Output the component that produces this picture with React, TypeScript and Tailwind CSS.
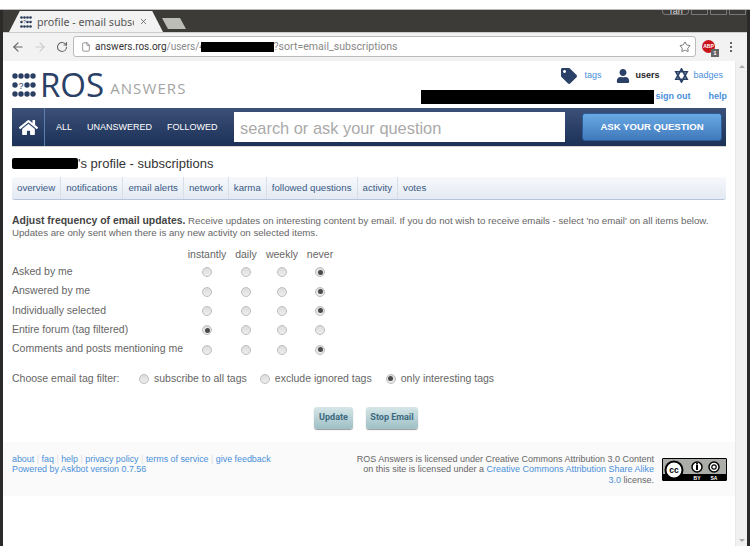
import React from "react";
import { ArrowLeft, ArrowRight, RotateCw, Star, File, X } from "lucide-react";
import { FaHome, FaTag, FaUser } from "react-icons/fa";

const Radio = ({ on = false }: { on?: boolean }) => (
  <span className="inline-flex h-[10px] w-[10px] shrink-0 items-center justify-center rounded-full border border-[#bdbdbd] bg-gradient-to-b from-[#dcdcdc] to-[#eeeeee]">
    {on && <span className="h-[5px] w-[5px] rounded-full bg-[#4a4a4a]" />}
  </span>
);

const Dots = ({ w, h, color }: { w: number; h: number; color: string }) => {
  const pts: [number, number][] = [];
  for (let y = 0; y < 3; y++) for (let x = 0; x < 4; x++) if (!(y === 1 && x === 1)) pts.push([x, y]);
  return (
    <svg width={w} height={h} viewBox="0 0 24 24" className="shrink-0">
      {pts.map(([x, y]) => (
        <circle key={`${x}${y}`} cx={3 + x * 6} cy={3 + y * 9} r={2.7} fill={color} />
      ))}
      <text x="9" y="16" textAnchor="middle" fontSize="9" fontFamily="Liberation Sans" fill={color}>?</text>
    </svg>
  );
};

const rows: [string, number][] = [
  ["Asked by me", 3],
  ["Answered by me", 3],
  ["Individually selected", 3],
  ["Entire forum (tag filtered)", 0],
  ["Comments and posts mentioning me", 3],
];

const tabs = ["overview", "notifications", "email alerts", "network", "karma", "followed questions", "activity", "votes"];
const foot = ["about", "faq", "help", "privacy policy", "terms of service", "give feedback"];

export default function App() {
  return (
    <div className="flex h-[556px] w-[750px] flex-col overflow-hidden bg-white font-['Liberation_Sans',sans-serif] text-[#666]">
      <div className="h-[10px] shrink-0 border-b border-[#bbb] bg-white" />
      <div className="flex h-[536px] shrink-0 border-x-[3px] border-x-[#2b2a28]">
        <div className="flex min-w-0 flex-1 flex-col">
          {/* tab strip */}
          <div className="flex h-[22px] shrink-0 items-end justify-between bg-[#3d3b37] pl-[6px] pr-[1px]">
            <div className="flex items-end">
              <div className="flex h-[21px] w-[154px] items-center bg-[#f2f2f2] pl-[11px] pr-[9px] [clip-path:polygon(0_100%,7%_0,93%_0,100%_100%)]">
                <Dots w={12} h={12} color="#2c3e5c" />
                <span className="ml-[5px] w-[97px] overflow-hidden whitespace-nowrap font-['Noto_Sans',sans-serif] text-[10.7px] leading-[14px] text-[#555]">profile - email subsc</span>
                <X size={9} strokeWidth={2} className="ml-[5px] text-[#555]" />
              </div>
              <div className="mb-[3px] ml-[-1px] h-[11px] w-[24px] bg-[#bdbdb8] [clip-path:polygon(0_0,75%_0,100%_100%,25%_100%)]" />
            </div>
            <div className="mb-[17px] flex items-start gap-[2px] text-[9px] leading-none text-[#ddd]">
              <span className="h-[5px] w-[27px] overflow-hidden rounded-b border border-t-0 border-[#777] text-center leading-[2px]">Tan</span>
              <span className="h-[5px] w-[17px] border border-t-0 border-[#777]" />
              <span className="h-[5px] w-[17px] border border-t-0 border-[#777]" />
              <span className="h-[5px] w-[17px] border border-t-0 border-[#777]" />
            </div>
          </div>
          {/* toolbar */}
          <div className="flex h-[29px] shrink-0 items-center border-t border-[#ccc] bg-[#f2f2f2] pb-[1px] pl-[8px]">
            <ArrowLeft size={14} strokeWidth={2} className="text-[#666]" />
            <ArrowRight size={14} strokeWidth={2} className="ml-[8px] text-[#ccc]" />
            <RotateCw size={12} strokeWidth={2.2} className="ml-[9px] text-[#666]" />
            <div className="ml-[5px] flex h-[21px] w-[623px] items-center rounded-[3px] border border-[#bbb] bg-white pl-[7px] pr-[4px] font-['Roboto',sans-serif] text-[10.6px]">
              <File size={10} strokeWidth={1.6} className="text-[#666]" />
              <span className="ml-[4px] text-[10px] text-[#333]">answers.ros.org</span>
              <span className="w-[34px] overflow-hidden whitespace-nowrap text-[10px] text-[#888]">/users/4</span>
              <span className="h-[10px] w-[73px] bg-black" />
              <span className="text-[#888]">?sort=email_subscriptions</span>
              <Star size={12} strokeWidth={1.6} className="ml-auto text-[#555]" />
            </div>
            <div className="relative ml-[6px] h-[13px] w-[13px] rounded-full bg-[#c9141b] text-center text-[5px] font-bold leading-[13px] text-white">
              ABP
              <span className="absolute -bottom-[4px] -right-[4px] h-[8px] w-[8px] bg-[#666] text-[6px] leading-[8px]">1</span>
            </div>
            <div className="ml-[15px] flex flex-col gap-[2px]">
              <span className="h-[2px] w-[2px] bg-[#666]" />
              <span className="h-[2px] w-[2px] bg-[#666]" />
              <span className="h-[2px] w-[2px] bg-[#666]" />
            </div>
          </div>
          {/* page */}
          <div className="flex min-h-0 flex-1">
            <div className="flex min-w-0 flex-1 flex-col bg-white">
              <div className="ml-[9px] mr-[8px] flex h-[47px] shrink-0 justify-between">
                <div className="flex items-center">
                  <Dots w={24} h={24} color="#2a3f63" />
                  <span className="ml-[4px] font-['Open_Sans',sans-serif] text-[33px] leading-none text-[#2a4066]">ROS</span>
                  <span className="ml-[6px] mt-[8px] font-['Open_Sans',sans-serif] text-[15px] leading-none tracking-[1.1px] text-[#a4a4a4]">ANSWERS</span>
                </div>
                <div className="flex flex-col items-end text-[9px]">
                  <div className="flex h-[29px] items-center pr-[4px] pb-[2px] pt-[2px]">
                    <FaTag size={16} className="text-[#2a4066]" />
                    <span className="ml-[7px] text-[#4a90d9]">tags</span>
                    <FaUser size={14} className="ml-[15px] text-[#2a4066]" />
                    <span className="ml-[5px] font-bold text-[#222]">users</span>
                    <svg width="15" height="15" viewBox="0 0 16 16" className="ml-[15px]" fill="none" stroke="#2a4066" strokeWidth="1.8">
                      <path d="M8 1 14 12H2ZM8 15 2 4H14Z" />
                    </svg>
                    <span className="ml-[4px] text-[#4a90d9]">badges</span>
                  </div>
                  <div className="flex items-center font-bold text-[#4a90d9]">
                    <span className="h-[14px] w-[233px] bg-black" />
                    <span className="ml-[1px]">sign out</span>
                    <span className="ml-[18px]">help</span>
                  </div>
                </div>
              </div>
              {/* nav */}
              <div className="mx-[9px] flex h-[39px] shrink-0 items-center border-b border-[#d8d8c8] bg-gradient-to-b from-[#3c5078] to-[#1c3158]">
                <div className="flex h-full w-[33px] items-center justify-center border-r border-[#5a7fb0]">
                  <FaHome size={19} className="text-white" />
                </div>
                <nav className="ml-[11px] flex w-[178px] gap-[15px] pt-[1px] text-[9px] text-white">
                  <span>ALL</span><span>UNANSWERED</span><span>FOLLOWED</span>
                </nav>
                <div className="flex h-[30px] w-[331px] items-center bg-white pl-[6px] pt-[2px] text-[16.4px] text-[#aaa]">search or ask your question</div>
                <div className="ml-[17px] flex h-[28px] w-[140px] items-center justify-center rounded-[3px] border border-[#2a5d9a] bg-gradient-to-b from-[#69a9e4] to-[#4079bb] text-[9.6px] font-bold text-white">ASK YOUR QUESTION</div>
              </div>
              {/* title */}
              <h1 className="relative mx-[9px] mt-[9px] h-[16px] text-[13px] leading-[16px] text-[#333]">
                <span className="inline-block h-[11px] w-[66px] rounded-[2px] bg-black align-[-1px]" />
                's profile - subscriptions
              </h1>
              {/* tabs */}
              <div className="mx-[9px] mt-[5px] flex h-[23px] shrink-0 items-center rounded-[3px] border-b border-[#b8c4d8] bg-gradient-to-b from-[#f6f8fb] to-[#e4eaf3] text-[9.7px] text-[#3a5a85]">
                {tabs.map((t, i) => (
                  <span key={t} className={i === tabs.length - 1 ? "flex h-full items-center px-[5px]" : "flex h-full items-center border-r border-[#d8dee8] px-[5px]"}>{t}</span>
                ))}
              </div>
              {/* intro */}
              <p className="mx-[9px] mt-[15px] text-[9.68px] leading-[12px]">
                <b className="text-[10.45px] text-[#444]">Adjust frequency of email updates.</b> Receive updates on interesting content by email. If you do not wish to receive emails - select 'no email' on all items below.<br />
                Updates are only sent when there is any new activity on selected items.
              </p>
              {/* table */}
              <div className="ml-[9px] mt-[8px] grid grid-cols-[175px_40px_38px_34px_42px] text-[10.5px]">
                <span className="h-[15px]" />
                {["instantly", "daily", "weekly", "never"].map((h) => (
                  <span key={h} className="flex h-[15px] items-center justify-center">{h}</span>
                ))}
                {rows.map(([label, sel]) => (
                  <React.Fragment key={label}>
                    <span className="flex h-[19.4px] items-center">{label}</span>
                    {[0, 1, 2, 3].map((c) => (
                      <span key={c} className="flex h-[19.4px] items-center justify-center pt-[1px]">
                        <Radio on={c === sel} />
                      </span>
                    ))}
                  </React.Fragment>
                ))}
              </div>
              {/* filter */}
              <div className="ml-[9px] mt-[13px] flex h-[14px] items-center whitespace-nowrap text-[10.5px]">
                <span className="w-[127px]">Choose email tag filter:</span>
                <Radio /><span className="ml-[5px]">subscribe to all tags</span>
                <span className="ml-[13px] flex"><Radio /></span><span className="ml-[5px]">exclude ignored tags</span>
                <span className="ml-[14px] flex"><Radio on /></span><span className="ml-[5px]">only interesting tags</span>
              </div>
              {/* buttons */}
              <div className="ml-[311px] mt-[21px] flex h-[22px] gap-[13px] whitespace-nowrap font-['Roboto',sans-serif] text-[9px] font-bold text-[#3d6a80]">
                <span className="flex w-[39px] items-center justify-center rounded-[3px] bg-gradient-to-b from-[#d6e6e8] to-[#9dbfc4] shadow-[0_1px_1px_#999]">Update</span>
                <span className="flex w-[52px] items-center justify-center rounded-[3px] bg-gradient-to-b from-[#d6e6e8] to-[#9dbfc4] shadow-[0_1px_1px_#999]">Stop Email</span>
              </div>
              {/* footer */}
              <footer className="mt-[13px] flex h-[54px] justify-between bg-[#fafafa] pl-[9px] pr-[8px] pt-[12px] text-[9px] leading-[10.5px]">
                <div className="text-[8.9px] text-[#4a90d9]">
                  <div className="flex">
                    {foot.map((f, i) => (
                      <span key={f} className="flex">
                        {i > 0 && <span className="mx-[2.5px] text-[#ddd]">|</span>}
                        {f}
                      </span>
                    ))}
                  </div>
                  <div>Powered by Askbot version 0.7.56</div>
                </div>
                <div className="flex items-start">
                  <p className="w-[300px] text-right">
                    ROS Answers is licensed under Creative Commons Attribution 3.0 Content<br />
                    on this site is licensed under a <span className="text-[#4a90d9]">Creative Commons Attribution Share Alike<br />3.0</span> license.
                  </p>
                  <div className="ml-[8px] mt-[4px] flex h-[23px] w-[65px] shrink-0 items-start rounded-[1px] border border-black bg-[#aaada8]">
                    <svg width="63" height="21" viewBox="0 0 63 21">
                      <rect x="0" y="15" width="63" height="6" fill="#000" />
                      <circle cx="11" cy="11" r="8.5" fill="#fff" stroke="#000" strokeWidth="2" />
                      <text x="11" y="14" textAnchor="middle" fontSize="8.5" fontWeight="700" fontFamily="Liberation Sans">cc</text>
                      <circle cx="34" cy="8" r="5" fill="#fff" stroke="#000" strokeWidth="1.5" />
                      <rect x="33" y="6" width="2" height="5" fill="#000" />
                      <circle cx="34" cy="4.7" r="1" fill="#000" />
                      <circle cx="51" cy="8" r="5" fill="#fff" stroke="#000" strokeWidth="1.5" />
                      <circle cx="51" cy="8" r="2.2" fill="none" stroke="#000" strokeWidth="1.2" />
                      <text x="34" y="20.5" textAnchor="middle" fontSize="5" fontWeight="700" fill="#fff" fontFamily="Liberation Sans">BY</text>
                      <text x="51" y="20.5" textAnchor="middle" fontSize="5" fontWeight="700" fill="#fff" fontFamily="Liberation Sans">SA</text>
                    </svg>
                  </div>
                </div>
              </footer>
            </div>
            {/* scrollbar */}
            <div className="flex w-[12px] shrink-0 flex-col items-center justify-between border-l border-[#e8e8e8] bg-[#f1f1f1] py-[4px]">
              <span className="h-0 w-0 border-x-[3px] border-b-[3px] border-x-transparent border-b-[#aaa]" />
              <span className="h-0 w-0 border-x-[3px] border-t-[3px] border-x-transparent border-t-[#aaa]" />
            </div>
          </div>
        </div>
      </div>
    </div>
  );
}
